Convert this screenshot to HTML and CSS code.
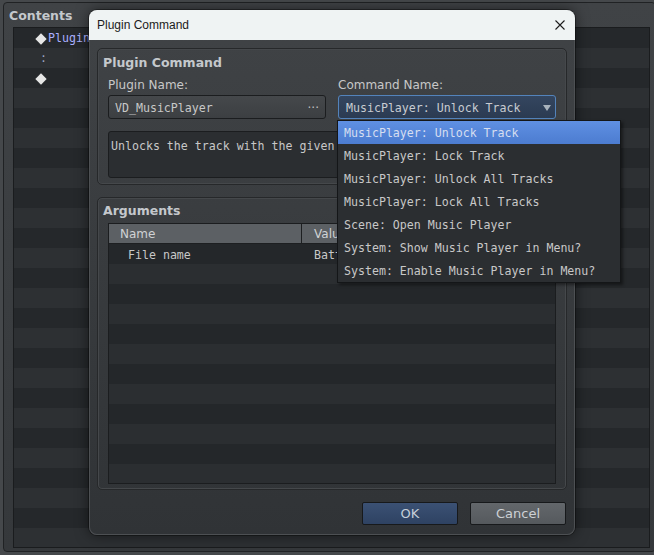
FILE: index.html
```html
<!DOCTYPE html>
<html lang="en">
<head>
  <meta charset="UTF-8" />
  <title>Plugin Command</title>
  <link rel="stylesheet" href="styles.css">
</head>
<body>
  <div class="frame">
    <div class="frame-title">Contents</div>
    <div class="list">
      <div class="list-row"><span class="diamond"></span><span class="cmd">Plugin Command : VD_MusicPlayer, MusicPlayer: Unlock Track</span></div>
      <div class="list-row"><span class="cont">:</span></div>
      <div class="list-row"><span class="diamond"></span></div>
    </div>
  </div>

  <div class="dialog">
    <div class="titlebar">
      <span>Plugin Command</span>
      <svg class="close" width="10" height="10" viewBox="0 0 10 10">
        <path d="M0.5 0.5 L9.5 9.5 M9.5 0.5 L0.5 9.5" stroke="#1c1c1c" stroke-width="1.1" fill="none"/>
      </svg>
    </div>
    <div class="dialog-body">
      <div class="group group-cmd">
        <div class="group-title">Plugin Command</div>
        <div class="fields">
          <div class="field-col">
            <div class="label">Plugin Name:</div>
            <div class="input">VD_MusicPlayer<span class="dots">···</span></div>
          </div>
          <div class="field-col">
            <div class="label">Command Name:</div>
            <div class="select">MusicPlayer: Unlock Track<span class="arrow"></span></div>
          </div>
        </div>
        <div class="desc">Unlocks the track with the given file name.</div>
      </div>

      <div class="group group-args">
        <div class="group-title">Arguments</div>
        <div class="table">
          <div class="thead">
            <div class="th th-name">Name</div>
            <div class="th">Value</div>
          </div>
          <div class="tr">
            <div class="td td-name">File name</div>
            <div class="td">Battle1</div>
          </div>
        </div>
      </div>

      <div class="buttons">
        <button class="btn btn-ok">OK</button>
        <button class="btn">Cancel</button>
      </div>
    </div>

    <!-- open command list -->
    <ul class="popup">
      <li class="active">MusicPlayer: Unlock Track</li>
      <li>MusicPlayer: Lock Track</li>
      <li>MusicPlayer: Unlock All Tracks</li>
      <li>MusicPlayer: Lock All Tracks</li>
      <li>Scene: Open Music Player</li>
      <li>System: Show Music Player in Menu?</li>
      <li>System: Enable Music Player in Menu?</li>
    </ul>
  </div>
</body>
</html>
```

FILE: styles.css
```css
* { box-sizing: border-box; }
body { margin: 0; width: 654px; height: 555px; overflow: hidden; position: relative; background: #45484b; font-family: "DejaVu Sans", sans-serif; font-size: 12px; color: #c8c8c8; }

/* background editor */
.frame { width: 653px; height: 550px; margin: 2px 0 0 3px; padding: 5px 5px 0 9px; border: 1px solid #202224; border-radius: 4px; background: linear-gradient(#404346, #35383b); }
.frame-title { font-weight: bold; font-size: 12.5px; line-height: 16px; margin-left: -4px; color: #c4c8cc; }
.list { margin-top: 3px; height: 521px; border: 1px solid #1a1c1e; background: repeating-linear-gradient(#25282b 0 20px, #2d3033 20px 40px); font-family: "DejaVu Sans Mono", monospace; font-size: 11.6px; }
.list-row { height: 20px; line-height: 21px; padding-left: 21px; white-space: nowrap; overflow: hidden; }
.diamond { display: inline-block; width: 8px; height: 8px; margin: 0 3px 0 2px; background: #e6e6e6; transform: rotate(45deg); vertical-align: -1px; }
.cmd { color: #aab0ff; }
.cont { padding-left: 5px; color: #9aa4c0; }

/* dialog window */
.dialog { position: absolute; left: 89px; top: 10px; width: 486px; height: 525px; border-radius: 8px; background: linear-gradient(#404346, #303336); box-shadow: 0 0 14px rgba(0,0,0,.55), 0 0 0 1px rgba(0,0,0,.35); }
.titlebar { height: 30px; display: flex; align-items: center; justify-content: space-between; padding: 0 10px 0 8px; background: #eff3f3; border-radius: 8px 8px 0 0; font-family: "Liberation Sans", sans-serif; font-size: 12px; color: #1b1b1b; }
.dialog-body { height: 495px; padding: 8px 7px 9px; border: 1px solid #4d5053; border-top: none; border-radius: 0 0 8px 8px; }

.group { border: 1px solid #26282a; border-radius: 5px; box-shadow: inset 0 0 0 1px #45484b; padding: 5px 10px 7px; }
.group-title { font-weight: bold; font-size: 12.5px; line-height: 17px; margin-left: -5px; color: #c4c8cc; }
.group-cmd { height: 137px; }
.group-args { height: 293px; margin-top: 12px; padding-top: 4px; padding-bottom: 6px; }

.fields { display: flex; gap: 12px; margin-top: 5px; }
.field-col { flex: 1; }
.label { line-height: 18px; }
.input, .select { height: 24px; margin-top: 1px; padding-top: 1px; border-radius: 3px; display: flex; align-items: center; justify-content: space-between; font-family: "DejaVu Sans Mono", monospace; font-size: 11.6px; }
.input { padding-left: 6px; padding-right: 6px; border: 1px solid #1b1d1f; background: linear-gradient(#45484b, #3c3f42); }
.dots { font-family: "DejaVu Sans", sans-serif; font-size: 12px; color: #c0c0c0; }
.select { padding-left: 7px; padding-right: 4px; border: 1px solid #5383bb; background: linear-gradient(#34465f, #2b3b52); color: #c8ccd2; }
.arrow { width: 0; height: 0; border-left: 4px solid transparent; border-right: 4px solid transparent; border-top: 6px solid #a8b2bc; }
.desc { height: 47px; margin-top: 12px; padding: 6px 2px 5px; border: 1px solid #1b1d1f; border-radius: 3px; background: #2b2e31; font-family: "DejaVu Sans Mono", monospace; font-size: 11.6px; line-height: 16px; white-space: nowrap; overflow: hidden; }

.table { height: 261px; margin-top: 4px; border: 1px solid #1b1d1f; background: repeating-linear-gradient(#24272a 0 20px, #2b2e31 20px 40px); background-position: 0 20px; }
.thead { display: flex; height: 20px; background: #5c6064; border-bottom: 1px solid #1d1f21; color: #d0d2d4; }
.th { line-height: 20px; padding-left: 12px; }
.th-name, .td-name { width: 193px; flex: none; }
.th-name { border-right: 1px solid #1d1f21; padding-left: 11px; }
.tr { display: flex; height: 20px; line-height: 22px; font-family: "DejaVu Sans Mono", monospace; font-size: 11.6px; }
.td { padding-left: 12px; }
.td-name { padding-left: 19px; }

.buttons { display: flex; justify-content: flex-end; gap: 12px; margin-top: 12px; padding-right: 1px; }
.btn { width: 96px; height: 23px; border: 1px solid #17191b; border-radius: 2px; font-family: "DejaVu Sans", sans-serif; font-size: 13px; color: #cdd1d5; background: linear-gradient(#63676b, #55595d); padding: 0; }
.btn-ok { background: linear-gradient(#3b5174, #2e4262); color: #c6cfd9; }

.popup { position: absolute; left: 248px; top: 110px; width: 284px; height: 163px; margin: 0; padding: 0; list-style: none; border: 1px solid #141618; background: #2b2e31; box-shadow: 2px 2px 3px rgba(0,0,0,.45); font-family: "DejaVu Sans Mono", monospace; font-size: 11.6px; color: #c8c8c8; }
.popup li { height: 23px; line-height: 25px; padding-left: 6px; white-space: nowrap; overflow: hidden; }
.popup li.active { background: linear-gradient(#5f90e3, #4c7cd0); color: #d6def0; }
```
